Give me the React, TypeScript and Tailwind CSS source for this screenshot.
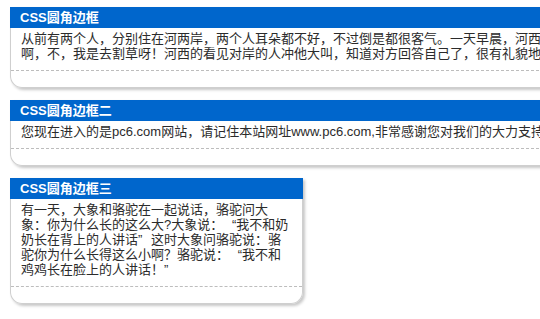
const font = { fontFamily: '"Liberation Sans", "Noto Sans CJK SC", sans-serif' };

interface IRoundBox {
  title: string;
  width: string;
  children: React.ReactNode;
}

const RoundBox: React.FC<IRoundBox> = ({ title, width, children }) => (
  <div
    className={`${width} shrink-0 rounded-b-[12px] bg-white shadow-[2px_2px_3px_rgba(0,0,0,0.22)] mb-[12px]`}
  >
    <h3 className="h-[21px] bg-[#0066cc] pl-[10px] text-[13px] font-bold leading-[21px] text-white [font-family:'Liberation_Sans','Noto_Sans_CJK_SC',sans-serif]">
      {title}
    </h3>
    <div className="rounded-b-[12px] border-x border-b border-[#cfcfcf]">
      <div
        className="px-[10px] pt-[3px] pb-[9px] text-[13px] leading-[15px] text-[#2b2b2b]"
        style={font}
      >
        {children}
      </div>
      <div className="border-t border-dashed border-[#bdbdbd]" />
      <div className="h-[16px]" />
    </div>
  </div>
);

// quote marks set in a full-width cell, as in the reference
const Open = () => <span className="inline-block w-[13px] text-right">“</span>;
const Close = () => <span className="inline-block w-[13px] text-left">”</span>;

export default function App() {
  return (
    <div
      lang="zh-CN"
      className="h-[319px] w-[540px] overflow-hidden bg-white pt-[7px] pl-[10px]"
    >
      <RoundBox title="CSS圆角边框" width="w-[620px]">
        <p className="whitespace-nowrap">
          从前有两个人，分别住在河两岸，两个人耳朵都不好，不过倒是都很客气。一天早晨，河西的人看见河东的人
        </p>
        <p className="whitespace-nowrap">
          啊，不，我是去割草呀！河西的看见对岸的人冲他大叫，知道对方回答自己了，很有礼貌地点点头
        </p>
      </RoundBox>

      <RoundBox title="CSS圆角边框二" width="w-[620px]">
        <p className="whitespace-nowrap">
          您现在进入的是pc6.com网站，请记住本站网址www.pc6.com,非常感谢您对我们的大力支持！
        </p>
      </RoundBox>

      <RoundBox title="CSS圆角边框三" width="w-[293px]">
        <p>
          有一天，大象和骆驼在一起说话，骆驼问大象：你为什么长的这么大?大象说：
          <Open />
          我不和奶奶长在背上的人讲话
          <Close />
          这时大象问骆驼说：骆驼你为什么长得这么小啊？骆驼说：
          <Open />
          我不和鸡鸡长在脸上的人讲话！
          <Close />
        </p>
      </RoundBox>
    </div>
  );
}
